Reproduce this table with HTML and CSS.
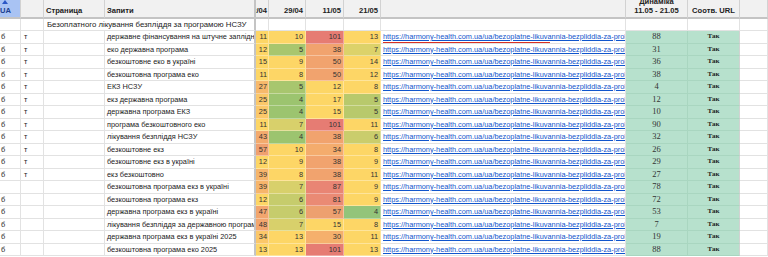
FILE: index.html
```html
<!DOCTYPE html>
<html>
<head>
<meta charset="utf-8">
<link rel="stylesheet" href="styles.css">
</head>
<body>
<div class="sheet">
  <div class="c h ha"><svg class="arr" width="6" height="4" viewBox="0 0 6 4"><path d="M0 4 L3 0 L6 4 Z" fill="#2a56c6"/></svg>UA</div>
  <div class="c h"></div>
  <div class="c h hl">Страница</div>
  <div class="c h hl frz">Запити</div>
  <div class="c h hr first">22/04</div>
  <div class="c h hr">29/04</div>
  <div class="c h hr">11/05</div>
  <div class="c h hr">21/05</div>
  <div class="c h"></div>
  <div class="c h hc two">Динаміка<br>11.05 - 21.05</div>
  <div class="c h hc">Соотв. URL</div>
  <div class="c h"></div>

  <div class="c t"></div><div class="c t"></div>
  <div class="c t title frz">Безоплатного лікування безпліддя за програмою НСЗУ</div>
  <div class="c t"></div><div class="c t"></div><div class="c t"></div><div class="c t"></div><div class="c t"></div>
  <div class="c t"></div><div class="c t"></div><div class="c t"></div>

  <div class="c a">б</div><div class="c b">т</div><div class="c"></div><div class="c q frz">державне фінансування на штучне запліднення</div>
  <div class="c n first" style="background:#fdd666">11</div><div class="c n" style="background:#fdd666">10</div><div class="c n" style="background:#e67c73">101</div><div class="c n" style="background:#fdd666">13</div>
  <div class="c u"><span class="url">https://harmony-health.com.ua/ua/bezoplatne-likuvannia-bezpliddia-za-prohramoiu-nszu/</span><span class="redline"></span></div>
  <div class="c d">88</div><div class="c s">Так</div><div class="c"></div>

  <div class="c a">б</div><div class="c b">т</div><div class="c"></div><div class="c q frz">еко державна програма</div>
  <div class="c n first" style="background:#fdd666">12</div><div class="c n" style="background:#a8c66e">5</div><div class="c n" style="background:#f1a36e">38</div><div class="c n" style="background:#dcd26a">7</div>
  <div class="c u"><span class="url">https://harmony-health.com.ua/ua/bezoplatne-likuvannia-bezpliddia-za-prohramoiu-nszu/</span></div>
  <div class="c d">31</div><div class="c s">Так</div><div class="c"></div>

  <div class="c a">б</div><div class="c b">т</div><div class="c"></div><div class="c q frz">безкоштовне еко в україні</div>
  <div class="c n first" style="background:#fdd666">15</div><div class="c n" style="background:#fdd666">9</div><div class="c n" style="background:#f1a36e">50</div><div class="c n" style="background:#fdd666">14</div>
  <div class="c u"><span class="url">https://harmony-health.com.ua/ua/bezoplatne-likuvannia-bezpliddia-za-prohramoiu-nszu/</span></div>
  <div class="c d">36</div><div class="c s">Так</div><div class="c"></div>

  <div class="c a">б</div><div class="c b">т</div><div class="c"></div><div class="c q frz">безкоштовна програма еко</div>
  <div class="c n first" style="background:#fdd666">11</div><div class="c n" style="background:#fdd666">8</div><div class="c n" style="background:#f1a36e">50</div><div class="c n" style="background:#fdd666">12</div>
  <div class="c u"><span class="url">https://harmony-health.com.ua/ua/bezoplatne-likuvannia-bezpliddia-za-prohramoiu-nszu/</span></div>
  <div class="c d">38</div><div class="c s">Так</div><div class="c"></div>

  <div class="c a">б</div><div class="c b">т</div><div class="c"></div><div class="c q frz">ЕКЗ НСЗУ</div>
  <div class="c n first" style="background:#f7b96b">27</div><div class="c n" style="background:#a8c66e">5</div><div class="c n" style="background:#fdd666">12</div><div class="c n" style="background:#fdd666">8</div>
  <div class="c u"><span class="url">https://harmony-health.com.ua/ua/bezoplatne-likuvannia-bezpliddia-za-prohramoiu-nszu/</span></div>
  <div class="c d">4</div><div class="c s">Так</div><div class="c"></div>

  <div class="c a">б</div><div class="c b">т</div><div class="c"></div><div class="c q frz">екз державна програма</div>
  <div class="c n first" style="background:#fbc869">25</div><div class="c n" style="background:#9cc46f">4</div><div class="c n" style="background:#fdd666">17</div><div class="c n" style="background:#b8c96c">5</div>
  <div class="c u"><span class="url">https://harmony-health.com.ua/ua/bezoplatne-likuvannia-bezpliddia-za-prohramoiu-nszu/</span></div>
  <div class="c d">12</div><div class="c s">Так</div><div class="c"></div>

  <div class="c a">б</div><div class="c b">т</div><div class="c"></div><div class="c q frz">державна програма ЕКЗ</div>
  <div class="c n first" style="background:#fbc869">25</div><div class="c n" style="background:#9cc46f">4</div><div class="c n" style="background:#fdd666">15</div><div class="c n" style="background:#b8c96c">5</div>
  <div class="c u"><span class="url">https://harmony-health.com.ua/ua/bezoplatne-likuvannia-bezpliddia-za-prohramoiu-nszu/</span></div>
  <div class="c d">10</div><div class="c s">Так</div><div class="c"></div>

  <div class="c a">б</div><div class="c b">т</div><div class="c"></div><div class="c q frz">програма безкоштовного еко</div>
  <div class="c n first" style="background:#fdd666">11</div><div class="c n" style="background:#d8d06b">7</div><div class="c n" style="background:#e67c73">101</div><div class="c n" style="background:#fdd666">11</div>
  <div class="c u"><span class="url">https://harmony-health.com.ua/ua/bezoplatne-likuvannia-bezpliddia-za-prohramoiu-nszu/</span></div>
  <div class="c d">90</div><div class="c s">Так</div><div class="c"></div>

  <div class="c a">б</div><div class="c b">т</div><div class="c"></div><div class="c q frz">лікування безпліддя НСЗУ</div>
  <div class="c n first" style="background:#f3aa6d">43</div><div class="c n" style="background:#9cc46f">4</div><div class="c n" style="background:#f1a36e">38</div><div class="c n" style="background:#cacd6c">6</div>
  <div class="c u"><span class="url">https://harmony-health.com.ua/ua/bezoplatne-likuvannia-bezpliddia-za-prohramoiu-nszu/</span></div>
  <div class="c d">32</div><div class="c s">Так</div><div class="c"></div>

  <div class="c a">б</div><div class="c b">т</div><div class="c"></div><div class="c q frz">безкоштовне екз</div>
  <div class="c n first" style="background:#f0a06f">57</div><div class="c n" style="background:#fdd666">10</div><div class="c n" style="background:#f4ac6d">34</div><div class="c n" style="background:#fdd666">8</div>
  <div class="c u"><span class="url">https://harmony-health.com.ua/ua/bezoplatne-likuvannia-bezpliddia-za-prohramoiu-nszu/</span></div>
  <div class="c d">26</div><div class="c s">Так</div><div class="c"></div>

  <div class="c a">б</div><div class="c b">т</div><div class="c"></div><div class="c q frz">безкоштовне екз в україні</div>
  <div class="c n first" style="background:#fdd666">12</div><div class="c n" style="background:#fdd666">9</div><div class="c n" style="background:#f1a36e">38</div><div class="c n" style="background:#fdd666">9</div>
  <div class="c u"><span class="url">https://harmony-health.com.ua/ua/bezoplatne-likuvannia-bezpliddia-za-prohramoiu-nszu/</span></div>
  <div class="c d">29</div><div class="c s">Так</div><div class="c"></div>

  <div class="c a">б</div><div class="c b">т</div><div class="c"></div><div class="c q frz">екз безкоштовно</div>
  <div class="c n first" style="background:#f6b56b">39</div><div class="c n" style="background:#fdd666">8</div><div class="c n" style="background:#f1a36e">38</div><div class="c n" style="background:#fdd666">11</div>
  <div class="c u"><span class="url">https://harmony-health.com.ua/ua/bezoplatne-likuvannia-bezpliddia-za-prohramoiu-nszu/</span></div>
  <div class="c d">27</div><div class="c s">Так</div><div class="c"></div>

  <div class="c a"></div><div class="c b"></div><div class="c"></div><div class="c q frz">безкоштовна програма екз в україні</div>
  <div class="c n first" style="background:#f6b56b">39</div><div class="c n" style="background:#d8d06b">7</div><div class="c n" style="background:#e98574">87</div><div class="c n" style="background:#fdd666">9</div>
  <div class="c u"><span class="url">https://harmony-health.com.ua/ua/bezoplatne-likuvannia-bezpliddia-za-prohramoiu-nszu/</span></div>
  <div class="c d">78</div><div class="c s">Так</div><div class="c"></div>

  <div class="c a">б</div><div class="c b"></div><div class="c"></div><div class="c q frz">безкоштовна програма екз</div>
  <div class="c n first" style="background:#fdd666">12</div><div class="c n" style="background:#c6cc6c">6</div><div class="c n" style="background:#ea8a74">81</div><div class="c n" style="background:#fdd666">9</div>
  <div class="c u"><span class="url">https://harmony-health.com.ua/ua/bezoplatne-likuvannia-bezpliddia-za-prohramoiu-nszu/</span></div>
  <div class="c d">72</div><div class="c s">Так</div><div class="c"></div>

  <div class="c a">б</div><div class="c b"></div><div class="c"></div><div class="c q frz">державна програма екз в україні</div>
  <div class="c n first" style="background:#f2a66e">47</div><div class="c n" style="background:#c6cc6c">6</div><div class="c n" style="background:#eda06f">57</div><div class="c n" style="background:#93c47a">4</div>
  <div class="c u"><span class="url">https://harmony-health.com.ua/ua/bezoplatne-likuvannia-bezpliddia-za-prohramoiu-nszu/</span></div>
  <div class="c d">53</div><div class="c s">Так</div><div class="c"></div>

  <div class="c a">б</div><div class="c b"></div><div class="c"></div><div class="c q frz">лікування безпліддя за державною програмою</div>
  <div class="c n first" style="background:#f2a66e">48</div><div class="c n" style="background:#d8d06b">7</div><div class="c n" style="background:#fdd666">15</div><div class="c n" style="background:#fdd666">8</div>
  <div class="c u"><span class="url">https://harmony-health.com.ua/ua/bezoplatne-likuvannia-bezpliddia-za-prohramoiu-nszu/</span></div>
  <div class="c d">7</div><div class="c s">Так</div><div class="c"></div>

  <div class="c a">б</div><div class="c b"></div><div class="c"></div><div class="c q frz">державна програма екз в україні 2025</div>
  <div class="c n first" style="background:#fbc769">34</div><div class="c n" style="background:#fdd666">13</div><div class="c n" style="background:#f5b06c">30</div><div class="c n" style="background:#fdd666">11</div>
  <div class="c u"><span class="url">https://harmony-health.com.ua/ua/bezoplatne-likuvannia-bezpliddia-za-prohramoiu-nszu/</span></div>
  <div class="c d">19</div><div class="c s">Так</div><div class="c"></div>

  <div class="c a">б</div><div class="c b"></div><div class="c"></div><div class="c q frz">безкоштовна програма еко 2025</div>
  <div class="c n first" style="background:#fdd666">13</div><div class="c n" style="background:#fdd666">13</div><div class="c n" style="background:#e67c73">101</div><div class="c n" style="background:#fdd666">13</div>
  <div class="c u"><span class="url">https://harmony-health.com.ua/ua/bezoplatne-likuvannia-bezpliddia-za-prohramoiu-nszu/</span></div>
  <div class="c d">88</div><div class="c s">Так</div><div class="c"></div>
</div>
</body>
</html>
```
FILE: styles.css
```css
html, body {
  margin: 0;
  padding: 0;
  background: #ffffff;
}
.sheet {
  display: grid;
  grid-template-columns: 21px 23px 61px 151px 13px 37px 38px 37px 245px 62px 52px 28px;
  grid-template-rows: 19px 12px repeat(18, 12.5px);
  width: 768px;
  font-family: "Liberation Sans", Arial, sans-serif;
  font-size: 7.35px;
  color: #222222;
}
.c {
  box-sizing: border-box;
  border-right: 1px solid #e2e2e2;
  border-bottom: 1px solid #e2e2e2;
  white-space: nowrap;
  overflow: hidden;
  line-height: 11.5px;
  padding: 0 2px;
  position: relative;
}
.frz {
  border-right: 2px solid #c4c4c4;
}
.h {
  background: #f1f1f1;
  border-right-color: #d2d2d2;
  border-bottom: 2px solid #c4c4c4;
  font-weight: bold;
  font-size: 7.6px;
  color: #222222;
  display: flex;
  align-items: flex-end;
  padding-bottom: 2px;
  line-height: 9px;
}
.h.frz {
  border-right: 2px solid #c4c4c4;
}
.ha {
  background: #a9c3f3;
  color: #1b3f91;
  padding-left: 0;
}
.arr {
  position: absolute;
  left: 2px;
  top: 0;
}
.hl {
  justify-content: flex-start;
}
.hr {
  justify-content: flex-end;
  padding-right: 2px;
  padding-left: 0;
}
.hc {
  justify-content: center;
  text-align: center;
}
.two {
  line-height: 8.5px;
}
.t {
  background: #ffffff;
}
.title {
  grid-column: span 2;
  padding-left: 3px;
  font-size: 7.8px;
}
.a {
  padding-left: 1px;
}
.b {
  padding-left: 3px;
}
.q {
  padding-left: 2px;
}
.n {
  display: flex;
  justify-content: flex-end;
  padding-right: 2px;
  padding-left: 0;
  border-right-color: rgba(255, 255, 255, 0.35);
  border-bottom-color: rgba(255, 255, 255, 0.35);
  color: #333333;
}
.first {
  padding-right: 1px;
}
.u {
  padding-left: 2px;
  overflow: hidden;
}
.url {
  color: #1155cc;
  text-decoration: underline;
}
.redline {
  position: absolute;
  left: 2px;
  top: 10.5px;
  width: 167px;
  height: 1px;
  background: #d93025;
}
.d {
  background: #b7e1cd;
  border-right-color: #a9d6c0;
  border-bottom-color: #a9d6c0;
  text-align: center;
  font-family: "Liberation Serif", "Times New Roman", serif;
  font-size: 8.5px;
  color: #333333;
}
.s {
  background: #b7e1cd;
  border-bottom-color: #a9d6c0;
  border-right-color: #d2d2d2;
  text-align: center;
  font-family: "Liberation Serif", "Times New Roman", serif;
  font-weight: bold;
  font-size: 7px;
  color: #222222;
}
```
